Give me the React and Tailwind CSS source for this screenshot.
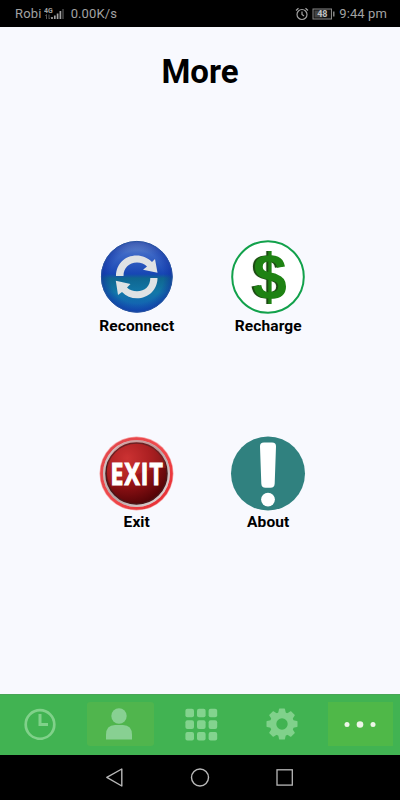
function ReconnectIcon() {
  return (
    <svg width="76" height="76" viewBox="0 0 76 76" className="block">
      <defs>
        <linearGradient id="blue" x1="0" y1="0" x2="0" y2="1">
          <stop offset="0" stopColor="#7391c9" />
          <stop offset="0.18" stopColor="#3d68c6" />
          <stop offset="0.46" stopColor="#1746b4" />
          <stop offset="0.52" stopColor="#0f6690" />
          <stop offset="0.72" stopColor="#1277a8" />
          <stop offset="1" stopColor="#1458b8" />
        </linearGradient>
        <radialGradient id="blueRim">
          <stop offset="0.75" stopColor="#1030a0" stopOpacity="0" />
          <stop offset="1" stopColor="#1030a0" stopOpacity="0.6" />
        </radialGradient>
      </defs>
      <circle cx="37.800" cy="37.800" r="35.800" fill="url(#blue)" />
      <circle cx="37.800" cy="37.800" r="35.400" fill="url(#blueRim)" stroke="#28529f" strokeWidth="1" />
      <g fill="#dfe2e4">
        <path d="M17 37 C17 25 26 16.500 37.500 16.500 C43.500 16.500 49 19 53 23 L56 20 L58.500 33.800 L44 30.800 L48 27.500 C45.500 25 42 23.500 38 23.500 C30 23.500 24.500 29 24.500 37 Z" />
        <path d="M58.500 39 C58.500 51 49 59.300 38 59.300 C32 59.300 27 57 23 53 L19 56 L16.800 41.700 L31.500 45 L28 48.500 C30.500 51 34 52.300 38 52.300 C46 52.300 51.300 47 51.300 39 Z" />
      </g>
    </svg>
  );
}

function RechargeIcon() {
  return (
    <svg width="76" height="76" viewBox="0 0 76 76" className="block">
      <circle cx="38" cy="38" r="35.800" fill="#fff" stroke="#12a14b" strokeWidth="2" />
      <text
        transform="translate(39.800 59.900) scale(1.04 1.1)"
        textAnchor="middle"
        fill="#1e8213"
        className="font-['Liberation_Sans',Arial,sans-serif] text-[59px] font-bold [filter:drop-shadow(-1.500px_0_0_#1c4a12)]"
      >
        $
      </text>
    </svg>
  );
}

function ExitIcon() {
  return (
    <svg width="76" height="76" viewBox="0 0 76 76" className="block">
      <defs>
        <linearGradient id="ring" x1="0" y1="0" x2="1" y2="1">
          <stop offset="0" stopColor="#e0474c" />
          <stop offset="0.5" stopColor="#f0494c" />
          <stop offset="1" stopColor="#e52a30" />
        </linearGradient>
        <linearGradient id="silver" x1="0" y1="0" x2="1" y2="1">
          <stop offset="0" stopColor="#d9cccc" />
          <stop offset="0.5" stopColor="#b5a5a5" />
          <stop offset="1" stopColor="#e8dddd" />
        </linearGradient>
        <radialGradient id="red" cx="0.35" cy="0.25" r="0.8">
          <stop offset="0" stopColor="#c52c2c" />
          <stop offset="0.5" stopColor="#991316" />
          <stop offset="1" stopColor="#4f0306" />
        </radialGradient>
      </defs>
      <circle cx="37.500" cy="38.500" r="37" fill="#f6a2a3" />
      <circle cx="37.500" cy="38.500" r="34.800" fill="none" stroke="url(#ring)" strokeWidth="3" />
      <circle cx="37.500" cy="38.500" r="33.500" fill="url(#silver)" />
      <circle cx="37.500" cy="38.500" r="30.500" fill="url(#red)" stroke="#4c1517" strokeWidth="1.500" />
      <path d="M8 36 A29.500 29.500 0 0 1 67 33 C50 32 31 42 13 52 Q8 45 8 36Z" fill="#e44b48" opacity="0.22" />
      <text transform="translate(38.200 50) scale(0.74 1)" textAnchor="middle" letterSpacing="1.500" fontFamily="'Open Sans', sans-serif" fontWeight="700" fontSize="31" fill="#fff" stroke="#fff" strokeWidth="1.200">EXIT</text>
    </svg>
  );
}

function AboutIcon() {
  return (
    <svg width="76" height="76" viewBox="0 0 76 76" className="block">
      <circle cx="38" cy="38.500" r="37" fill="#30817f" />
      <path d="M34 7.500 H42 Q46.200 7.500 46 11.500 L44.700 48.500 Q44.500 52.800 40.500 52.800 H35.500 Q31.500 52.800 31.300 48.500 L30 11.500 Q29.800 7.500 34 7.500Z" fill="#fff" />
      <circle cx="38" cy="64.600" r="6.900" fill="#fff" />
    </svg>
  );
}

function Tile({ icon, label }) {
  return (
    <div className="flex h-[196.500px] flex-col items-center">
      {icon}
      <span className="mt-px text-[15.500px] leading-5 font-bold tracking-[0.1px] text-black">{label}</span>
    </div>
  );
}

function StatusBar() {
  return (
    <header className="flex h-[26.500px] items-center justify-between bg-black pr-[13px] pl-[15px] text-[13px] text-[#a2a2a2]">
      <div className="flex items-center pt-px">
        <span className="tracking-[0.2px]">Robi</span>
        <svg width="21" height="15" viewBox="0 0 21 15" className="ml-[2px]">
          <text x="0" y="6.500" fontSize="7" fontWeight="700" fontFamily="Roboto, sans-serif" fill="#a2a2a2">4G</text>
          <path d="M2.500 13V8.500M1.300 9.800L2.500 8.500M5 8.500V13M6.200 11.700L5 13" stroke="#555" fill="none" />
          <path d="M8 13v-2M10.800 13V9.500M13.600 13V7.500M16.400 13V5" stroke="#a2a2a2" strokeWidth="1.700" />
          <path d="M19 13V3" stroke="#4a4a4a" strokeWidth="1.500" />
        </svg>
        <span className="ml-[6px] tracking-[0.1px]">0.00K/s</span>
      </div>
      <div className="flex items-center pt-px">
        <svg width="14" height="14" viewBox="0 0 14 14" fill="none" stroke="#a2a2a2" strokeWidth="1.200">
          <circle cx="7" cy="7.500" r="5" />
          <path d="M7 4.500V7.500L9 9M1 3.500L3.500 1.200M13 3.500L10.500 1.200" />
        </svg>
        <svg width="24" height="12" viewBox="0 0 24 12" className="ml-[3px]">
          <rect x="1" y="1" width="18.500" height="10" fill="#111" stroke="#888" />
          <rect x="2.500" y="2.500" width="8" height="7" fill="#444" />
          <path d="M21.800 3.500v5" stroke="#999" strokeWidth="1.300" />
          <text x="10.300" y="9.200" textAnchor="middle" fontFamily="Roboto, sans-serif" fontWeight="700" fontSize="9" fill="#c0c0c0">48</text>
        </svg>
        <span className="ml-[3px] tracking-[0.1px]">9:44 pm</span>
      </div>
    </header>
  );
}

const cells = [0, 11.6, 23.2];
const teeth = [0, 45, 90, 135, 180, 225, 270, 315];

function TabBar() {
  return (
    <nav className="flex h-[61px] items-center border-t border-[#49a557] bg-[#41b352] pb-[1.500px] text-[#80d18a]">
      <div className="flex w-[79.500px] justify-center">
        <svg width="32" height="32" viewBox="0 0 32 32" fill="none" stroke="currentColor">
          <circle cx="16" cy="16.500" r="14.300" strokeWidth="2.700" />
          <path d="M16 6V16.500H24" strokeWidth="3" />
        </svg>
      </div>
      <div className="ml-[7px] flex h-[44px] w-[67px] items-center justify-center rounded-[3px] bg-[#50b54d]">
        <svg width="28" height="34" viewBox="0 0 28 34" fill="#88d092" className="-ml-[2px]">
          <circle cx="14" cy="9" r="7.700" />
          <path d="M1 32.500V28Q1 18 10 18H18Q27 18 27 28V32.500Z" />
        </svg>
      </div>
      <div className="flex w-[95px] justify-center">
        <svg width="33" height="33" viewBox="0 0 33 33" fill="#83d38e">
          {cells.map((y) => cells.map((x) => (
            <rect key={`${x}-${y}`} x={x + 0.4} y={y + 0.7} width="8.600" height="8.600" rx="2" />
          )))}
        </svg>
      </div>
      <div className="flex w-[67px] justify-center">
        <svg width="32" height="32" viewBox="0 0 32 32">
          <circle cx="16" cy="16" r="8.900" fill="none" stroke="#80d18b" strokeWidth="6.400" />
          {teeth.map((a) => (
            <path key={a} d="M12 6L13 1Q13.200 0.500 13.700 0.500H18.300Q18.800 0.500 19 1L20 6Z" fill="#80d18b" transform={`rotate(${a} 16 16)`} />
          ))}
        </svg>
      </div>
      <div className="ml-[12px] flex h-[44px] w-[65px] items-center justify-center bg-[#4fb848]">
        <svg width="34" height="10" viewBox="0 0 34 10" fill="#eef5e8">
          <circle cx="4" cy="5.500" r="2.500" />
          <circle cx="17" cy="5.500" r="3.300" />
          <circle cx="30" cy="5.500" r="2.500" />
        </svg>
      </div>
    </nav>
  );
}

function SystemBar() {
  return (
    <footer className="flex h-[45px] justify-center gap-[65px] bg-black pt-[12px]">
      <svg width="20" height="20" viewBox="0 0 20 20" fill="none" stroke="#b8b8b8" strokeWidth="1.400" strokeLinejoin="round">
        <path d="M1.800 10.300L16.800 2V19Z" />
      </svg>
      <svg width="20" height="20" viewBox="0 0 20 20" fill="none" stroke="#b8b8b8" strokeWidth="1.400">
        <circle cx="10" cy="10.500" r="8.500" />
      </svg>
      <svg width="20" height="20" viewBox="0 0 20 20" fill="none" stroke="#b8b8b8" strokeWidth="1.300">
        <rect x="2" y="2.800" width="15.300" height="15.300" />
      </svg>
    </footer>
  );
}

export default function App() {
  return (
    <div className="flex h-[800px] w-[400px] flex-col overflow-hidden bg-[#f8f9fe] font-['Roboto',sans-serif]">
      <StatusBar />
      <main className="flex flex-1 flex-col items-center">
        <h1 className="mt-[25.500px] text-[33px] leading-10 font-bold text-black">More</h1>
        <div className="mt-[146.500px] mr-[-5px] grid w-[263px] grid-cols-2">
          <Tile icon={<ReconnectIcon />} label="Reconnect" />
          <Tile icon={<RechargeIcon />} label="Recharge" />
          <Tile icon={<ExitIcon />} label="Exit" />
          <Tile icon={<AboutIcon />} label="About" />
        </div>
      </main>
      <TabBar />
      <SystemBar />
    </div>
  );
}
